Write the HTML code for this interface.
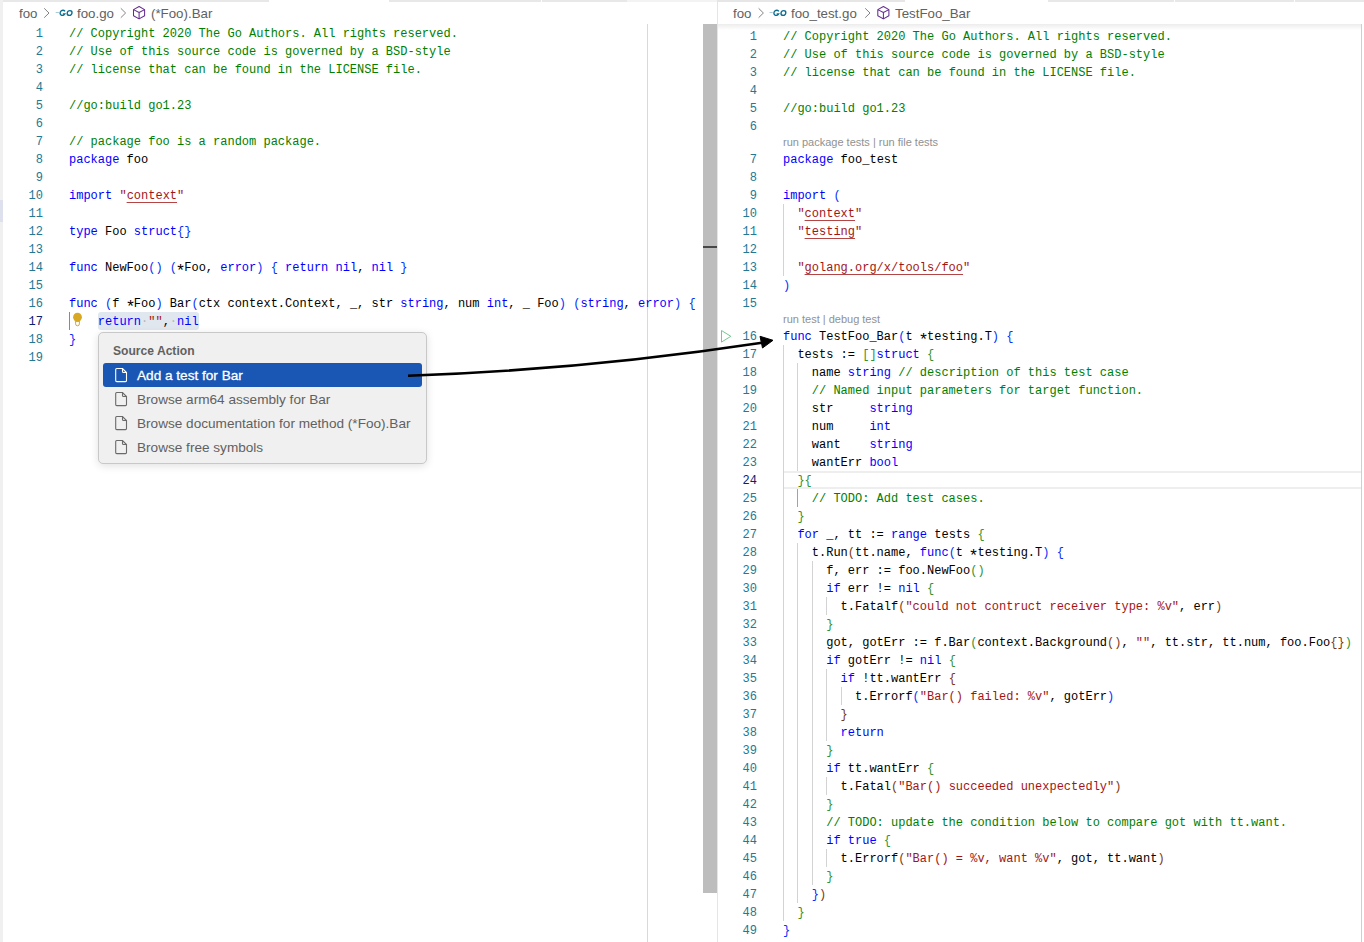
<!DOCTYPE html>
<html><head><meta charset="utf-8"><style>
html,body{margin:0;padding:0}
body{width:1364px;height:942px;position:relative;overflow:hidden;background:#fff;font-family:"Liberation Sans",sans-serif}
.abs{position:absolute}
.code{position:absolute;height:18px;line-height:18px;font-family:"Liberation Mono",monospace;font-size:12px;white-space:pre;color:#000}
.ln{position:absolute;width:39px;text-align:right;height:18px;line-height:18px;font-family:"Liberation Mono",monospace;font-size:12px;color:#237893}
.ln.cur{color:#0b216f}
.k{color:#0000ff}.s{color:#a31515}.c{color:#008000}
.b0{color:#0431fa}.b1{color:#319331}.b2{color:#7b3814}
u{text-decoration:underline;text-decoration-color:rgba(163,21,21,0.8);text-underline-offset:3px}
.ws{color:#b8b8b8}
.ast{display:inline-block;transform:translateY(4px) scale(1.4)}
.sel{position:absolute;height:18px;background:#e1e7ef;border-radius:3px}
.ig{position:absolute;width:1px;height:18px;background:#d3d3d3}
.ig.act{background:#a3a3a3}
.curline{position:absolute;height:14px;border-top:2px solid #eeeeee;border-bottom:2px solid #eeeeee}
.lens{position:absolute;height:15px;line-height:15px;font-size:11px;color:#919191}
.bc{position:absolute;top:3px;height:22px;line-height:22px;font-size:13.3px;color:#616161;white-space:nowrap}
.bc svg{vertical-align:middle}
.pitem{position:absolute;left:137px;height:24px;line-height:24px;font-size:13.6px;color:#616161;white-space:nowrap}
</style></head><body>
<!-- top strips -->
<div class="abs" style="left:3px;top:0;width:266px;height:2px;background:#e8e8e8"></div>
<div class="abs" style="left:389px;top:0;width:152px;height:2px;background:#e8e8e8"></div>
<div class="abs" style="left:542px;top:0;width:85px;height:2px;background:#e8e8e8"></div>
<div class="abs" style="left:627px;top:0;width:90px;height:2px;background:#f3f3f3"></div>
<div class="abs" style="left:718px;top:0;width:187px;height:2px;background:#e6e6e6"></div>
<div class="abs" style="left:1048px;top:0;width:126px;height:2px;background:#e8e8e8"></div>
<div class="abs" style="left:1175px;top:0;width:119px;height:2px;background:#e8e8e8"></div>
<div class="abs" style="left:1295px;top:0;width:69px;height:2px;background:#e8e8e8"></div>
<!-- left border -->
<div class="abs" style="left:0;top:0;width:3px;height:942px;background:#f0f0f0"></div>
<div class="abs" style="left:0;top:200px;width:3px;height:22px;background:#dfe0ee"></div>
<!-- divider -->
<div class="abs" style="left:717px;top:0;width:1px;height:942px;background:#e5e5e5"></div>
<!-- right edge -->
<div class="abs" style="left:1361px;top:24px;width:1px;height:918px;background:#cfcfcf"></div>
<!-- ruler -->
<div class="abs" style="left:647px;top:24px;width:1px;height:918px;background:#d9d9d9"></div>

<!-- breadcrumbs -->
<div class="bc" style="left:19px">foo</div>
<div class="bc" style="left:77px">foo.go</div>
<div class="bc" style="left:151px">(*Foo).Bar</div>
<div class="bc" style="left:733px">foo</div>
<div class="bc" style="left:791px">foo_test.go</div>
<div class="bc" style="left:895px">TestFoo_Bar</div>
<svg class="abs" style="left:0;top:0" width="1364" height="24" viewBox="0 0 1364 24">
<path d="M44.2 8.3L49.0 13L44.2 17.7" fill="none" stroke="#7c7c7c" stroke-width="0.95"/><g transform="translate(67.0 13) skewX(-7) translate(-67.0 -13)"><path d="M55.6 12.4h3.2" stroke="#a9cbd8" stroke-width="1"/><path d="M64.8 11.3a2.6 2.6 0 1 0 0.3 2.5h-2.2" fill="none" stroke="#0c6d92" stroke-width="1.35"/><circle cx="69.6" cy="13" r="2.4" fill="none" stroke="#0c6d92" stroke-width="1.35"/></g><path d="M120.8 8.3L125.6 13L120.8 17.7" fill="none" stroke="#7c7c7c" stroke-width="0.95"/><path d="M139.1 6.5L144.6 9.6V15.7L139.1 18.9L133.5 15.7V9.6z M133.5 9.6L139.1 12.5L144.6 9.6 M139.1 12.5V18.9" fill="none" stroke="#652d90" stroke-width="1.05" stroke-linejoin="round"/><path d="M758.6 8.3L763.4 13L758.6 17.7" fill="none" stroke="#7c7c7c" stroke-width="0.95"/><g transform="translate(780.8 13) skewX(-7) translate(-780.8 -13)"><path d="M769.4 12.4h3.2" stroke="#a9cbd8" stroke-width="1"/><path d="M778.6 11.3a2.6 2.6 0 1 0 0.3 2.5h-2.2" fill="none" stroke="#0c6d92" stroke-width="1.35"/><circle cx="783.4" cy="13" r="2.4" fill="none" stroke="#0c6d92" stroke-width="1.35"/></g><path d="M865.2 8.3L870.0 13L865.2 17.7" fill="none" stroke="#7c7c7c" stroke-width="0.95"/><path d="M883.4 6.5L888.9 9.6V15.7L883.4 18.9L877.8 15.7V9.6z M877.8 9.6L883.4 12.5L888.9 9.6 M883.4 12.5V18.9" fill="none" stroke="#652d90" stroke-width="1.05" stroke-linejoin="round"/>
</svg>

<!-- right breadcrumb shadow -->
<div class="abs" style="left:718px;top:24px;width:643px;height:6px;background:linear-gradient(#ececec,rgba(255,255,255,0))"></div>

<div class="ln" style="top:25px;left:4px">1</div>
<div class="code" style="top:25px;left:69.0px"><span class=c>// Copyright 2020 The Go Authors. All rights reserved.</span></div>
<div class="ln" style="top:43px;left:4px">2</div>
<div class="code" style="top:43px;left:69.0px"><span class=c>// Use of this source code is governed by a BSD-style</span></div>
<div class="ln" style="top:61px;left:4px">3</div>
<div class="code" style="top:61px;left:69.0px"><span class=c>// license that can be found in the LICENSE file.</span></div>
<div class="ln" style="top:79px;left:4px">4</div>
<div class="code" style="top:79px;left:69.0px"></div>
<div class="ln" style="top:97px;left:4px">5</div>
<div class="code" style="top:97px;left:69.0px"><span class=c>//go:build go1.23</span></div>
<div class="ln" style="top:115px;left:4px">6</div>
<div class="code" style="top:115px;left:69.0px"></div>
<div class="ln" style="top:133px;left:4px">7</div>
<div class="code" style="top:133px;left:69.0px"><span class=c>// package foo is a random package.</span></div>
<div class="ln" style="top:151px;left:4px">8</div>
<div class="code" style="top:151px;left:69.0px"><span class=k>package</span> foo</div>
<div class="ln" style="top:169px;left:4px">9</div>
<div class="code" style="top:169px;left:69.0px"></div>
<div class="ln" style="top:187px;left:4px">10</div>
<div class="code" style="top:187px;left:69.0px"><span class=k>import</span> <span class=s>"<u>context</u>"</span></div>
<div class="ln" style="top:205px;left:4px">11</div>
<div class="code" style="top:205px;left:69.0px"></div>
<div class="ln" style="top:223px;left:4px">12</div>
<div class="code" style="top:223px;left:69.0px"><span class=k>type</span> Foo <span class=k>struct</span><span class=b0>{</span><span class=b0>}</span></div>
<div class="ln" style="top:241px;left:4px">13</div>
<div class="code" style="top:241px;left:69.0px"></div>
<div class="ln" style="top:259px;left:4px">14</div>
<div class="code" style="top:259px;left:69.0px"><span class=k>func</span> NewFoo<span class=b0>(</span><span class=b0>)</span> <span class=b0>(</span><span class=ast>*</span>Foo, <span class=k>error</span><span class=b0>)</span> <span class=b0>{</span> <span class=k>return</span> <span class=k>nil</span>, <span class=k>nil</span> <span class=b0>}</span></div>
<div class="ln" style="top:277px;left:4px">15</div>
<div class="code" style="top:277px;left:69.0px"></div>
<div class="ln" style="top:295px;left:4px">16</div>
<div class="code" style="top:295px;left:69.0px"><span class=k>func</span> <span class=b0>(</span>f <span class=ast>*</span>Foo<span class=b0>)</span> Bar<span class=b0>(</span>ctx context.Context, _, str <span class=k>string</span>, num <span class=k>int</span>, _ Foo<span class=b0>)</span> <span class=b0>(</span><span class=k>string</span>, <span class=k>error</span><span class=b0>)</span> <span class=b0>{</span></div>
<div class="ln cur" style="top:313px;left:4px">17</div>
<div class="sel" style="top:312px;left:98px;width:101px"></div>
<div class="code" style="top:313px;left:97.8px"><span class=k>return</span><span class=ws>·</span><span class=s>""</span>,<span class=ws>·</span><span class=k>nil</span></div>
<div class="ln" style="top:331px;left:4px">18</div>
<div class="code" style="top:331px;left:69.0px"><span class=b0>}</span></div>
<div class="ln" style="top:349px;left:4px">19</div>
<div class="code" style="top:349px;left:69.0px"></div>
<div class="curline" style="top:471px;left:783px;width:578px"></div>
<div class="ln" style="top:28px;left:718px">1</div>
<div class="code" style="top:28px;left:783.0px"><span class=c>// Copyright 2020 The Go Authors. All rights reserved.</span></div>
<div class="ln" style="top:46px;left:718px">2</div>
<div class="code" style="top:46px;left:783.0px"><span class=c>// Use of this source code is governed by a BSD-style</span></div>
<div class="ln" style="top:64px;left:718px">3</div>
<div class="code" style="top:64px;left:783.0px"><span class=c>// license that can be found in the LICENSE file.</span></div>
<div class="ln" style="top:82px;left:718px">4</div>
<div class="code" style="top:82px;left:783.0px"></div>
<div class="ln" style="top:100px;left:718px">5</div>
<div class="code" style="top:100px;left:783.0px"><span class=c>//go:build go1.23</span></div>
<div class="ln" style="top:118px;left:718px">6</div>
<div class="code" style="top:118px;left:783.0px"></div>
<div class="ln" style="top:151px;left:718px">7</div>
<div class="code" style="top:151px;left:783.0px"><span class=k>package</span> foo_test</div>
<div class="ln" style="top:169px;left:718px">8</div>
<div class="code" style="top:169px;left:783.0px"></div>
<div class="ln" style="top:187px;left:718px">9</div>
<div class="code" style="top:187px;left:783.0px"><span class=k>import</span> <span class=b0>(</span></div>
<div class="ln" style="top:205px;left:718px">10</div>
<div class="ig" style="top:204px;left:783px"></div>
<div class="code" style="top:205px;left:797.4px"><span class=s>"<u>context</u>"</span></div>
<div class="ln" style="top:223px;left:718px">11</div>
<div class="ig" style="top:222px;left:783px"></div>
<div class="code" style="top:223px;left:797.4px"><span class=s>"<u>testing</u>"</span></div>
<div class="ln" style="top:241px;left:718px">12</div>
<div class="ig" style="top:240px;left:783px"></div>
<div class="code" style="top:241px;left:783.0px"></div>
<div class="ln" style="top:259px;left:718px">13</div>
<div class="ig" style="top:258px;left:783px"></div>
<div class="code" style="top:259px;left:797.4px"><span class=s>"<u>golang.org/x/tools/foo</u>"</span></div>
<div class="ln" style="top:277px;left:718px">14</div>
<div class="code" style="top:277px;left:783.0px"><span class=b0>)</span></div>
<div class="ln" style="top:295px;left:718px">15</div>
<div class="code" style="top:295px;left:783.0px"></div>
<div class="ln" style="top:328px;left:718px">16</div>
<div class="code" style="top:328px;left:783.0px"><span class=k>func</span> TestFoo_Bar<span class=b0>(</span>t <span class=ast>*</span>testing.T<span class=b0>)</span> <span class=b0>{</span></div>
<div class="ln" style="top:346px;left:718px">17</div>
<div class="ig" style="top:345px;left:783px"></div>
<div class="code" style="top:346px;left:797.4px">tests := <span class=b1>[</span><span class=b1>]</span><span class=k>struct</span> <span class=b1>{</span></div>
<div class="ln" style="top:364px;left:718px">18</div>
<div class="ig" style="top:363px;left:783px"></div>
<div class="ig" style="top:363px;left:797px"></div>
<div class="code" style="top:364px;left:811.8px">name <span class=k>string</span> <span class=c>// description of this test case</span></div>
<div class="ln" style="top:382px;left:718px">19</div>
<div class="ig" style="top:381px;left:783px"></div>
<div class="ig" style="top:381px;left:797px"></div>
<div class="code" style="top:382px;left:811.8px"><span class=c>// Named input parameters for target function.</span></div>
<div class="ln" style="top:400px;left:718px">20</div>
<div class="ig" style="top:399px;left:783px"></div>
<div class="ig" style="top:399px;left:797px"></div>
<div class="code" style="top:400px;left:811.8px">str     <span class=k>string</span></div>
<div class="ln" style="top:418px;left:718px">21</div>
<div class="ig" style="top:417px;left:783px"></div>
<div class="ig" style="top:417px;left:797px"></div>
<div class="code" style="top:418px;left:811.8px">num     <span class=k>int</span></div>
<div class="ln" style="top:436px;left:718px">22</div>
<div class="ig" style="top:435px;left:783px"></div>
<div class="ig" style="top:435px;left:797px"></div>
<div class="code" style="top:436px;left:811.8px">want    <span class=k>string</span></div>
<div class="ln" style="top:454px;left:718px">23</div>
<div class="ig" style="top:453px;left:783px"></div>
<div class="ig" style="top:453px;left:797px"></div>
<div class="code" style="top:454px;left:811.8px">wantErr <span class=k>bool</span></div>
<div class="ln cur" style="top:472px;left:718px">24</div>
<div class="ig" style="top:471px;left:783px"></div>
<div class="code" style="top:472px;left:797.4px"><span class=b1>}</span><span class=b1>{</span></div>
<div class="ln" style="top:490px;left:718px">25</div>
<div class="ig" style="top:489px;left:783px"></div>
<div class="ig act" style="top:489px;left:797px"></div>
<div class="code" style="top:490px;left:811.8px"><span class=c>// TODO: Add test cases.</span></div>
<div class="ln" style="top:508px;left:718px">26</div>
<div class="ig" style="top:507px;left:783px"></div>
<div class="code" style="top:508px;left:797.4px"><span class=b1>}</span></div>
<div class="ln" style="top:526px;left:718px">27</div>
<div class="ig" style="top:525px;left:783px"></div>
<div class="code" style="top:526px;left:797.4px"><span class=k>for</span> _, tt := <span class=k>range</span> tests <span class=b1>{</span></div>
<div class="ln" style="top:544px;left:718px">28</div>
<div class="ig" style="top:543px;left:783px"></div>
<div class="ig" style="top:543px;left:797px"></div>
<div class="code" style="top:544px;left:811.8px">t.Run<span class=b2>(</span>tt.name, <span class=k>func</span><span class=b0>(</span>t <span class=ast>*</span>testing.T<span class=b0>)</span> <span class=b0>{</span></div>
<div class="ln" style="top:562px;left:718px">29</div>
<div class="ig" style="top:561px;left:783px"></div>
<div class="ig" style="top:561px;left:797px"></div>
<div class="ig" style="top:561px;left:812px"></div>
<div class="code" style="top:562px;left:826.2px">f, err := foo.NewFoo<span class=b1>(</span><span class=b1>)</span></div>
<div class="ln" style="top:580px;left:718px">30</div>
<div class="ig" style="top:579px;left:783px"></div>
<div class="ig" style="top:579px;left:797px"></div>
<div class="ig" style="top:579px;left:812px"></div>
<div class="code" style="top:580px;left:826.2px"><span class=k>if</span> err != <span class=k>nil</span> <span class=b1>{</span></div>
<div class="ln" style="top:598px;left:718px">31</div>
<div class="ig" style="top:597px;left:783px"></div>
<div class="ig" style="top:597px;left:797px"></div>
<div class="ig" style="top:597px;left:812px"></div>
<div class="ig" style="top:597px;left:826px"></div>
<div class="code" style="top:598px;left:840.6px">t.Fatalf<span class=b2>(</span><span class=s>&quot;could not contruct receiver type: %v&quot;</span>, err<span class=b2>)</span></div>
<div class="ln" style="top:616px;left:718px">32</div>
<div class="ig" style="top:615px;left:783px"></div>
<div class="ig" style="top:615px;left:797px"></div>
<div class="ig" style="top:615px;left:812px"></div>
<div class="code" style="top:616px;left:826.2px"><span class=b1>}</span></div>
<div class="ln" style="top:634px;left:718px">33</div>
<div class="ig" style="top:633px;left:783px"></div>
<div class="ig" style="top:633px;left:797px"></div>
<div class="ig" style="top:633px;left:812px"></div>
<div class="code" style="top:634px;left:826.2px">got, gotErr := f.Bar<span class=b1>(</span>context.Background<span class=b2>(</span><span class=b2>)</span>, <span class=s>&quot;&quot;</span>, tt.str, tt.num, foo.Foo<span class=b2>{</span><span class=b2>}</span><span class=b1>)</span></div>
<div class="ln" style="top:652px;left:718px">34</div>
<div class="ig" style="top:651px;left:783px"></div>
<div class="ig" style="top:651px;left:797px"></div>
<div class="ig" style="top:651px;left:812px"></div>
<div class="code" style="top:652px;left:826.2px"><span class=k>if</span> gotErr != <span class=k>nil</span> <span class=b1>{</span></div>
<div class="ln" style="top:670px;left:718px">35</div>
<div class="ig" style="top:669px;left:783px"></div>
<div class="ig" style="top:669px;left:797px"></div>
<div class="ig" style="top:669px;left:812px"></div>
<div class="ig" style="top:669px;left:826px"></div>
<div class="code" style="top:670px;left:840.6px"><span class=k>if</span> !tt.wantErr <span class=b2>{</span></div>
<div class="ln" style="top:688px;left:718px">36</div>
<div class="ig" style="top:687px;left:783px"></div>
<div class="ig" style="top:687px;left:797px"></div>
<div class="ig" style="top:687px;left:812px"></div>
<div class="ig" style="top:687px;left:826px"></div>
<div class="ig" style="top:687px;left:841px"></div>
<div class="code" style="top:688px;left:855.0px">t.Errorf<span class=b0>(</span><span class=s>&quot;Bar() failed: %v&quot;</span>, gotErr<span class=b0>)</span></div>
<div class="ln" style="top:706px;left:718px">37</div>
<div class="ig" style="top:705px;left:783px"></div>
<div class="ig" style="top:705px;left:797px"></div>
<div class="ig" style="top:705px;left:812px"></div>
<div class="ig" style="top:705px;left:826px"></div>
<div class="code" style="top:706px;left:840.6px"><span class=b2>}</span></div>
<div class="ln" style="top:724px;left:718px">38</div>
<div class="ig" style="top:723px;left:783px"></div>
<div class="ig" style="top:723px;left:797px"></div>
<div class="ig" style="top:723px;left:812px"></div>
<div class="ig" style="top:723px;left:826px"></div>
<div class="code" style="top:724px;left:840.6px"><span class=k>return</span></div>
<div class="ln" style="top:742px;left:718px">39</div>
<div class="ig" style="top:741px;left:783px"></div>
<div class="ig" style="top:741px;left:797px"></div>
<div class="ig" style="top:741px;left:812px"></div>
<div class="code" style="top:742px;left:826.2px"><span class=b1>}</span></div>
<div class="ln" style="top:760px;left:718px">40</div>
<div class="ig" style="top:759px;left:783px"></div>
<div class="ig" style="top:759px;left:797px"></div>
<div class="ig" style="top:759px;left:812px"></div>
<div class="code" style="top:760px;left:826.2px"><span class=k>if</span> tt.wantErr <span class=b1>{</span></div>
<div class="ln" style="top:778px;left:718px">41</div>
<div class="ig" style="top:777px;left:783px"></div>
<div class="ig" style="top:777px;left:797px"></div>
<div class="ig" style="top:777px;left:812px"></div>
<div class="ig" style="top:777px;left:826px"></div>
<div class="code" style="top:778px;left:840.6px">t.Fatal<span class=b2>(</span><span class=s>&quot;Bar() succeeded unexpectedly&quot;</span><span class=b2>)</span></div>
<div class="ln" style="top:796px;left:718px">42</div>
<div class="ig" style="top:795px;left:783px"></div>
<div class="ig" style="top:795px;left:797px"></div>
<div class="ig" style="top:795px;left:812px"></div>
<div class="code" style="top:796px;left:826.2px"><span class=b1>}</span></div>
<div class="ln" style="top:814px;left:718px">43</div>
<div class="ig" style="top:813px;left:783px"></div>
<div class="ig" style="top:813px;left:797px"></div>
<div class="ig" style="top:813px;left:812px"></div>
<div class="code" style="top:814px;left:826.2px"><span class=c>// TODO: update the condition below to compare got with tt.want.</span></div>
<div class="ln" style="top:832px;left:718px">44</div>
<div class="ig" style="top:831px;left:783px"></div>
<div class="ig" style="top:831px;left:797px"></div>
<div class="ig" style="top:831px;left:812px"></div>
<div class="code" style="top:832px;left:826.2px"><span class=k>if</span> <span class=k>true</span> <span class=b1>{</span></div>
<div class="ln" style="top:850px;left:718px">45</div>
<div class="ig" style="top:849px;left:783px"></div>
<div class="ig" style="top:849px;left:797px"></div>
<div class="ig" style="top:849px;left:812px"></div>
<div class="ig" style="top:849px;left:826px"></div>
<div class="code" style="top:850px;left:840.6px">t.Errorf<span class=b2>(</span><span class=s>&quot;Bar() = %v, want %v&quot;</span>, got, tt.want<span class=b2>)</span></div>
<div class="ln" style="top:868px;left:718px">46</div>
<div class="ig" style="top:867px;left:783px"></div>
<div class="ig" style="top:867px;left:797px"></div>
<div class="ig" style="top:867px;left:812px"></div>
<div class="code" style="top:868px;left:826.2px"><span class=b1>}</span></div>
<div class="ln" style="top:886px;left:718px">47</div>
<div class="ig" style="top:885px;left:783px"></div>
<div class="ig" style="top:885px;left:797px"></div>
<div class="code" style="top:886px;left:811.8px"><span class=b0>}</span><span class=b2>)</span></div>
<div class="ln" style="top:904px;left:718px">48</div>
<div class="ig" style="top:903px;left:783px"></div>
<div class="code" style="top:904px;left:797.4px"><span class=b1>}</span></div>
<div class="ln" style="top:922px;left:718px">49</div>
<div class="code" style="top:922px;left:783.0px"><span class=b0>}</span></div>
<div class="lens" style="top:135px;left:783px">run package tests | run file tests</div>
<div class="lens" style="top:312px;left:783px">run test | debug test</div>

<!-- cursor + lightbulb left -->
<div class="abs" style="left:69px;top:312px;width:1px;height:18px;background:#8a8a8a"></div>
<svg class="abs" style="left:0;top:300px" width="100" height="40" viewBox="0 300 100 40">
<circle cx="77.5" cy="317.2" r="4.4" fill="#d9a822"/>
<path d="M74.6 319.5h5.8l-0.4 2H75z" fill="#d9a822"/>
<path d="M75.6 321.3h3.8v2.6a1.9 1.9 0 0 1-3.8 0z" fill="none" stroke="#d9a822" stroke-width="1"/>
</svg>

<!-- left scrollbar -->
<div class="abs" style="left:703px;top:24px;width:14px;height:869px;background:#bdbdbd"></div>
<div class="abs" style="left:703px;top:246px;width:14px;height:2px;background:#474747"></div>

<!-- run test icon -->
<svg class="abs" style="left:720px;top:329px" width="13" height="15" viewBox="0 0 13 15"><path d="M1.5 1.5L10.8 7.3 1.5 13.1z" fill="none" stroke="#73c991" stroke-width="1" stroke-linejoin="miter"/></svg>

<!-- popup -->
<div class="abs" style="left:98px;top:332px;width:327px;height:130px;background:#f0f0f0;border:1px solid #c8c8c8;border-radius:5px;box-shadow:0 2px 8px rgba(0,0,0,0.12)"></div>
<div class="abs" style="left:113px;top:341px;height:20px;line-height:20px;font-size:12.1px;font-weight:bold;color:#616161">Source Action</div>
<div class="abs" style="left:103px;top:363px;width:319px;height:24px;background:#1a56b4;border-radius:3px"></div>
<div class="pitem" style="top:364px;color:#fff;-webkit-text-stroke:0.3px #fff">Add a test for Bar</div>
<div class="pitem" style="top:388px">Browse arm64 assembly for Bar</div>
<div class="pitem" style="top:412px">Browse documentation for method (*Foo).Bar</div>
<div class="pitem" style="top:436px">Browse free symbols</div>
<svg class="abs" style="left:0;top:360px" width="140" height="100" viewBox="0 360 140 100">
<path d="M115.7 369.5 a1 1 0 0 1 1-1 H122.5 L126.5 372.5 V380.6 a1 1 0 0 1 -1 1 H116.7 a1 1 0 0 1 -1-1z" fill="none" stroke="#ffffff" stroke-width="1.1"/><path d="M122.5 368.5 V371.5 a1 1 0 0 0 1 1 H126.5" fill="none" stroke="#ffffff" stroke-width="1.1"/><path d="M115.7 393.5 a1 1 0 0 1 1-1 H122.5 L126.5 396.5 V404.6 a1 1 0 0 1 -1 1 H116.7 a1 1 0 0 1 -1-1z" fill="none" stroke="#6a6a6a" stroke-width="1.1"/><path d="M122.5 392.5 V395.5 a1 1 0 0 0 1 1 H126.5" fill="none" stroke="#6a6a6a" stroke-width="1.1"/><path d="M115.7 417.5 a1 1 0 0 1 1-1 H122.5 L126.5 420.5 V428.6 a1 1 0 0 1 -1 1 H116.7 a1 1 0 0 1 -1-1z" fill="none" stroke="#6a6a6a" stroke-width="1.1"/><path d="M122.5 416.5 V419.5 a1 1 0 0 0 1 1 H126.5" fill="none" stroke="#6a6a6a" stroke-width="1.1"/><path d="M115.7 441.5 a1 1 0 0 1 1-1 H122.5 L126.5 444.5 V452.6 a1 1 0 0 1 -1 1 H116.7 a1 1 0 0 1 -1-1z" fill="none" stroke="#6a6a6a" stroke-width="1.1"/><path d="M122.5 440.5 V443.5 a1 1 0 0 0 1 1 H126.5" fill="none" stroke="#6a6a6a" stroke-width="1.1"/>
</svg>

<!-- arrow -->
<svg class="abs" style="left:0;top:0" width="1364" height="942" viewBox="0 0 1364 942">
<path d="M408 375.8 Q585 369.6 762 342.7" fill="none" stroke="#000" stroke-width="2.6"/>
<path d="M773 340.3 L760 336.3 L762.5 348 z" fill="#000" stroke="#000" stroke-width="1" stroke-linejoin="round"/>
</svg>
</body></html>
